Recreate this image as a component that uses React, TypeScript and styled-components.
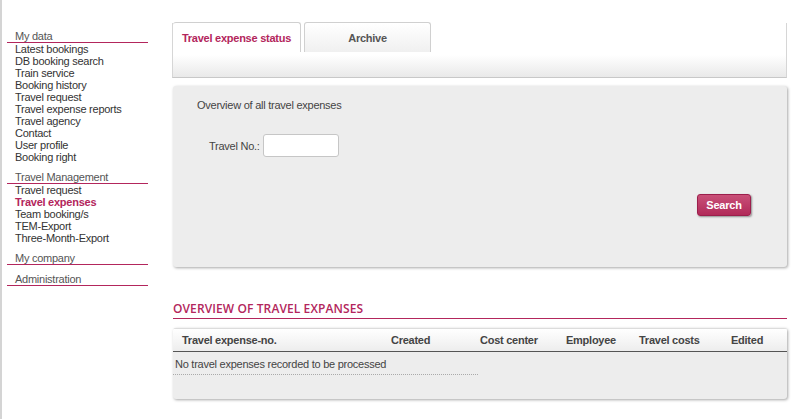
import * as React from 'react'
import styled, { createGlobalStyle } from 'styled-components'

const crimson = '#b3265c'
const textColor = '#333'

const GlobalStyle = createGlobalStyle`
    html, body {
        margin: 0;
        padding: 0;
        background: #fff;
    }
    body {
        font-family: "Liberation Sans", Arial, sans-serif;
        font-size: 11px;
        letter-spacing: -0.25px;
        color: ${textColor};
    }
`

const Page = styled.div`
    display: flex;
    min-height: 100vh;
    border-left: 2px solid #d4d4d4;
    box-sizing: border-box;
    padding-left: 5px;
`

const Sidebar = styled.nav`
    width: 141px;
    padding-top: 30px;
    flex-shrink: 0;
`
const NavGroup = styled.div`
    margin-bottom: 8px;
`
const NavHeading = styled.div`
    line-height: 12px;
    padding-left: 8px;
    color: #555;
    border-bottom: 1px solid ${crimson};
`
const NavItem = styled.a<{ $active?: boolean }>`
    display: block;
    line-height: 12px;
    padding-left: 8px;
    color: ${(p) => (p.$active ? crimson : textColor)};
    font-weight: ${(p) => (p.$active ? 'bold' : 'normal')};
    text-decoration: none;
`

const Main = styled.main`
    margin-left: 25px;
    width: 614px;
    padding-top: 23px;
`

const TabBar = styled.div`
    border: 1px solid #d6d6d6;
    border-top: none;
    border-bottom-color: #c8c8c8;
    height: 54px;
    background: linear-gradient(to bottom, #fff 0px, #fff 32px, #e9e9e9 54px);
    display: flex;
    align-items: flex-start;
    gap: 3px;
    margin-left: -1px;
`
const Tab = styled.div<{ $active?: boolean }>`
    width: 127px;
    height: 30px;
    box-sizing: border-box;
    border: 1px solid #d0d0d0;
    border-bottom: none;
    border-radius: 3px 3px 0 0;
    margin-top: -1px;
    display: flex;
    align-items: center;
    justify-content: center;
    font-weight: bold;
    color: ${(p) => (p.$active ? crimson : '#555')};
    background: ${(p) =>
        p.$active ? '#fff' : 'linear-gradient(to bottom, #fff, #f0f0f0)'};
    &:first-child {
        border-left: none;
        width: 128px;
    }
`

const Panel = styled.section`
    background: #ededed;
    border-radius: 3px;
    box-shadow: 1px 1px 3px rgba(0, 0, 0, 0.35);
`
const SearchPanel = styled(Panel)`
    margin-top: 8px;
    height: 181px;
    padding: 12px 24px 0 24px;
    box-sizing: border-box;
    display: flex;
    flex-direction: column;
`
const Intro = styled.div`
    color: #444;
    line-height: 14px;
`
const FieldRow = styled.div`
    display: flex;
    align-items: center;
    margin-top: 22px;
    margin-left: 12px;
    gap: 3px;
    color: #444;
`
const Input = styled.input`
    width: 76px;
    height: 23px;
    box-sizing: border-box;
    border: 1px solid #c6c6c6;
    border-radius: 3px;
    background: #fff;
    outline: none;
`
const ButtonRow = styled.div`
    display: flex;
    justify-content: flex-end;
    margin-top: 37px;
    margin-right: 12px;
`
const Button = styled.button`
    width: 54px;
    height: 22px;
    border: 1px solid #9c1f4c;
    border-radius: 3px;
    background: linear-gradient(to bottom, #c95078, #b12a59);
    color: #fff;
    font-family: "Liberation Sans", Arial, sans-serif;
    font-weight: bold;
    font-size: 11px;
    letter-spacing: -0.2px;
    box-shadow: 1px 1px 2px rgba(0, 0, 0, 0.4);
    padding: 0;
`

const SectionTitle = styled.h2`
    margin: 34px 0 0 0;
    font-family: "Open Sans", sans-serif;
    font-size: 12px;
    font-weight: 600;
    letter-spacing: 0.1px;
    color: ${crimson};
    line-height: 16px;
    border-bottom: 1px solid ${crimson};
    padding-bottom: 1px;
`

const TablePanel = styled(Panel)`
    margin-top: 9px;
    height: 71px;
    overflow: hidden;
`
const HeaderRow = styled.div`
    display: grid;
    grid-template-columns: 209px 89px 86px 73px 92px 1fr;
    padding-left: 9px;
    height: 22px;
    align-items: center;
    font-weight: bold;
    color: #444;
    background: linear-gradient(to bottom, #fff, #ededed);
    border-top: 1px solid #dcdcdc;
    border-bottom: 1px solid #555;
`
const EmptyRow = styled.div`
    width: 303px;
    padding-left: 2px;
    line-height: 14px;
    padding-top: 5px;
    padding-bottom: 3px;
    color: #444;
    border-bottom: 1px dotted #aaa;
`

const navGroups: { title: string; items: { label: string; active?: boolean }[] }[] = [
    {
        title: 'My data',
        items: [
            { label: 'Latest bookings' },
            { label: 'DB booking search' },
            { label: 'Train service' },
            { label: 'Booking history' },
            { label: 'Travel request' },
            { label: 'Travel expense reports' },
            { label: 'Travel agency' },
            { label: 'Contact' },
            { label: 'User profile' },
            { label: 'Booking right' },
        ],
    },
    {
        title: 'Travel Management',
        items: [
            { label: 'Travel request' },
            { label: 'Travel expenses', active: true },
            { label: 'Team booking/s' },
            { label: 'TEM-Export' },
            { label: 'Three-Month-Export' },
        ],
    },
    { title: 'My company', items: [] },
    { title: 'Administration', items: [] },
]

const columns = ['Travel expense-no.', 'Created', 'Cost center', 'Employee', 'Travel costs', 'Edited']

export default function App() {
    return (
        <>
            <GlobalStyle />
            <Page>
                <Sidebar>
                    {navGroups.map((g) => (
                        <NavGroup key={g.title}>
                            <NavHeading>{g.title}</NavHeading>
                            {g.items.map((it) => (
                                <NavItem key={it.label} href="#" $active={it.active}>
                                    {it.label}
                                </NavItem>
                            ))}
                        </NavGroup>
                    ))}
                </Sidebar>
                <Main>
                    <TabBar>
                        <Tab $active>Travel expense status</Tab>
                        <Tab>Archive</Tab>
                    </TabBar>
                    <SearchPanel>
                        <Intro>Overview of all travel expenses</Intro>
                        <FieldRow>
                            <span>Travel No.:</span>
                            <Input type="text" />
                        </FieldRow>
                        <ButtonRow>
                            <Button>Search</Button>
                        </ButtonRow>
                    </SearchPanel>
                    <SectionTitle>OVERVIEW OF TRAVEL EXPANSES</SectionTitle>
                    <TablePanel>
                        <HeaderRow>
                            {columns.map((c) => (
                                <span key={c}>{c}</span>
                            ))}
                        </HeaderRow>
                        <EmptyRow>No travel expenses recorded to be processed</EmptyRow>
                    </TablePanel>
                </Main>
            </Page>
        </>
    )
}
